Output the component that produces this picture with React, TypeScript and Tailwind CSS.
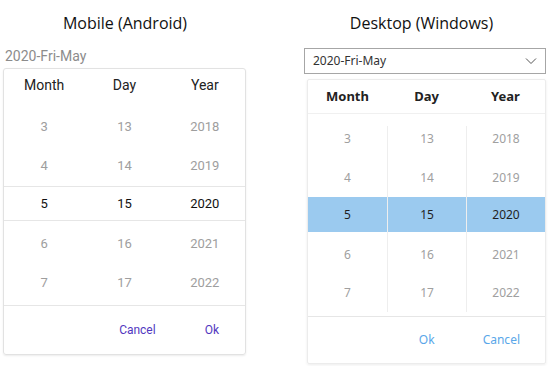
import React from "react";

const leftRows = [
  ["3", "13", "2018"],
  ["4", "14", "2019"],
  ["5", "15", "2020"],
  ["6", "16", "2021"],
  ["7", "17", "2022"],
];

function Chevron() {
  return (
    <svg width="12" height="8" viewBox="0 0 12 8" fill="none">
      <path d="M1 1.5 L6 6.5 L11 1.5" stroke="#555" strokeWidth="1" />
    </svg>
  );
}

function MobilePicker() {
  const roboto = { fontFamily: "Roboto, 'Noto Sans', sans-serif" };
  return (
    <div className="w-[250px] flex flex-col" style={roboto}>
      <div
        className="h-[24px] mt-[11px] w-[250px] text-center text-[16px] leading-[24px] text-[#111]"
        style={{ fontFamily: "'Open Sans', 'Noto Sans', sans-serif" }}
      >
        Mobile (Android)
      </div>
      <div className="mt-[12px] pl-[5px] h-[18px] text-[14px] leading-[18px] text-[#8c8c8c]">
        2020-Fri-May
      </div>
      <div className="mt-[3px] ml-[3px] w-[243px] h-[287px] border border-[#e2e2e2] rounded-[3px] shadow-[0_1px_2px_rgba(0,0,0,0.08)] flex flex-col">
        <div className="h-[33px] grid grid-cols-3 items-center text-center text-[14px] text-[#222]">
          <div>Month</div>
          <div>Day</div>
          <div>Year</div>
        </div>
        <div className="pt-[5px] flex flex-col">
          {leftRows.map((r, i) =>
            i === 2 ? (
              <div key={i} className="h-[39px] flex flex-col justify-start">
                <div className="mt-[1px] h-[35px] border-y border-[#e6e6e6] grid grid-cols-3 items-center text-center text-[13px] text-[#111]">
                  {r.map((c) => (
                    <div key={c}>{c}</div>
                  ))}
                </div>
              </div>
            ) : (
              <div
                key={i}
                className="h-[39px] grid grid-cols-3 items-center text-center text-[13px] text-[#9e9e9e]"
              >
                {r.map((c) => (
                  <div key={c}>{c}</div>
                ))}
              </div>
            )
          )}
        </div>
        <div className="mt-[3px] border-t border-[#e6e6e6] flex-1 flex items-center justify-end gap-[49px] pr-[26px] text-[12px] text-[#5237c0]">
          <span>Cancel</span>
          <span>Ok</span>
        </div>
      </div>
    </div>
  );
}

function DesktopPicker() {
  const font = { fontFamily: "'Noto Sans', 'Open Sans', sans-serif" };
  const cols = [0, 1, 2];
  return (
    <div className="w-[245px] flex flex-col ml-[54px]" style={font}>
      <div
        className="h-[24px] mt-[11px] w-[235px] text-center text-[16px] leading-[24px] text-[#111]"
        style={{ fontFamily: "'Open Sans', 'Noto Sans', sans-serif" }}
      >
        Desktop (Windows)
      </div>
      <div className="mt-[13px] w-[242px] h-[26px] border border-[#a6a6a6] flex items-center justify-between pl-[8px] pr-[8px] text-[12px] text-[#333]">
        <span>2020-Fri-May</span>
        <Chevron />
      </div>
      <div className="mt-[5px] ml-[3px] w-[239px] h-[285px] border border-[#ececec] rounded-[2px] shadow-[0_1px_3px_rgba(0,0,0,0.08)] flex flex-col">
        <div className="h-[34px] border-b border-[#f0f0f0] grid grid-cols-3 items-center text-center text-[13px] font-bold text-[#222]">
          <div>Month</div>
          <div>Day</div>
          <div>Year</div>
        </div>
        <div className="mt-[12px] h-[177px] grid grid-cols-3">
          {cols.map((c) => (
            <div key={c} className={c === 0 ? "" : "border-l border-[#eeeeee]"}>
              <div className="-mt-[6px] flex flex-col text-center text-[12px]">
                <div className="h-[38px] flex items-center justify-center text-[#a0a0a0]">{leftRows[0][c]}</div>
                <div className="h-[39px] flex items-center justify-center text-[#a0a0a0]">{leftRows[1][c]}</div>
                <div className="h-[35px] flex items-center justify-center bg-[#9bcaef] text-[#1f1f1f]">{leftRows[2][c]}</div>
                <div className="mt-[4px] h-[38px] flex items-center justify-center text-[#a0a0a0]">{leftRows[3][c]}</div>
                <div className="h-[38px] flex items-center justify-center text-[#a0a0a0]">{leftRows[4][c]}</div>
              </div>
            </div>
          ))}
        </div>
        <div className="mt-[13px] border-t border-[#e6e6e6] flex-1 flex items-center justify-end gap-[48px] pr-[25px] text-[12px] text-[#59a7e9]">
          <span>Ok</span>
          <span>Cancel</span>
        </div>
      </div>
    </div>
  );
}

export default function App() {
  return (
    <div className="w-[550px] h-[366px] bg-white flex overflow-hidden">
      <MobilePicker />
      <DesktopPicker />
    </div>
  );
}
